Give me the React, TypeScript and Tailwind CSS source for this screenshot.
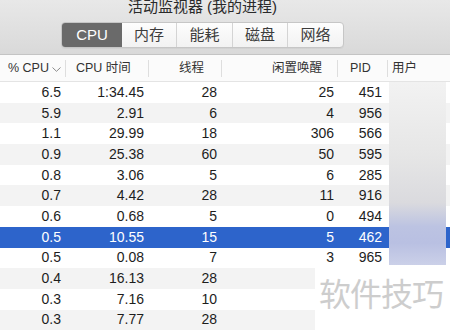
import React from 'react';

const rows = [
    ['6.5', '1:34.45', '28', '25', '451'],
    ['5.9', '2.91', '6', '4', '956'],
    ['1.1', '29.99', '18', '306', '566'],
    ['0.9', '25.38', '60', '50', '595'],
    ['0.8', '3.06', '5', '6', '285'],
    ['0.7', '4.42', '28', '11', '916'],
    ['0.6', '0.68', '5', '0', '494'],
    ['0.5', '10.55', '15', '5', '462'],
    ['0.5', '0.08', '7', '3', '965'],
    ['0.4', '16.13', '28', '', ''],
    ['0.3', '7.16', '10', '', ''],
    ['0.3', '7.77', '28', '', ''],
];

const tabs = [
    { label: 'CPU', w: 'w-[60px]' },
    { label: '内存', w: 'w-[54px]' },
    { label: '能耗', w: 'w-[56px]' },
    { label: '磁盘', w: 'w-[55px]' },
    { label: '网络', w: 'w-[56px]' },
];

function Divider() {
    return <div className="w-px h-[17px] bg-[#dedede] shrink-0"></div>;
}

export default function App() {
    return (
        <div className="relative w-[450px] h-[332px] overflow-hidden bg-white text-[#1d1d1d] font-['Liberation_Sans','Noto_Sans_CJK_SC',sans-serif]">
            {/* title bar */}
            <div className="h-[55px] flex flex-col items-center pr-[45px] bg-[linear-gradient(#e8e8e8,#d9d9d9)] border-b border-[#c4c4c4]">
                <div className="-mt-[3px] h-[20px] leading-[20px] text-[15px] text-[#2a2a2a]">活动监视器 (我的进程)</div>
                <div className="mt-[5px] flex h-[26px] rounded-[4px] border border-[#c6c6c6] bg-[linear-gradient(#fdfdfd,#f2f2f2)] overflow-hidden shadow-[0_1px_0_rgba(0,0,0,0.04)]">
                    {tabs.map((t, i) => (
                        <div
                            key={t.label}
                            className={`${t.w} flex items-center justify-center text-[15px] ${i === 0 ? 'bg-[#6a6a6a] text-white' : 'text-[#3c3c3c] border-l border-[#d4d4d4]'} ${i === 1 ? 'border-l-0' : ''}`}
                        >
                            {t.label}
                        </div>
                    ))}
                </div>
            </div>

            {/* header */}
            <div className="h-[27px] flex items-center text-[12.5px] text-[#333] bg-[#fbfbfb] border-b border-[#e4e4e4]">
                <div className="w-[65px] flex items-center pl-[8px]">
                    <span>% CPU</span>
                    <svg width="9" height="5" viewBox="0 0 9 5" className="ml-[3px] mt-[2px]">
                        <path d="M0.5 0.5 L4.5 4.3 L8.5 0.5" fill="none" stroke="#8a8a8a" strokeWidth="1" />
                    </svg>
                </div>
                <Divider />
                <div className="w-[82px] pl-[10px]">CPU 时间</div>
                <Divider />
                <div className="w-[72px] text-right pr-[17px]">线程</div>
                <Divider />
                <div className="w-[115px] text-right pr-[15px]">闲置唤醒</div>
                <Divider />
                <div className="w-[49px] pl-[12px]">PID</div>
                <Divider />
                <div className="flex-1 pl-[4px]">用户</div>
            </div>

            {/* rows */}
            <div className="flex flex-col text-[14px]">
                {rows.map((r, i) => (
                    <div
                        key={i}
                        className={`h-[20.7px] flex items-center ${i === 7 ? 'bg-[#2d64cb] text-white' : i % 2 === 1 ? 'bg-[#f3f3f3]' : 'bg-white'}`}
                    >
                        <div className="w-[66px] text-right pr-[5px]">{r[0]}</div>
                        <div className="w-[83px] text-right pr-[5px]">{r[1]}</div>
                        <div className="w-[73px] text-right pr-[5px]">{r[2]}</div>
                        <div className="w-[116px] text-right pr-[4px]">{r[3]}</div>
                        <div className="w-[50px] text-right pr-[6px]">{r[4]}</div>
                        <div className="flex-1"></div>
                    </div>
                ))}
            </div>

            {/* blurred user column */}
            <div className="absolute left-[389px] top-[82px] w-[57px] h-[183px] bg-[linear-gradient(#f2f2f2_0%,#e6e6e6_40%,#dadade_66%,#bcc3e2_79%,#b9c0e2_88%,#cbd0e8_100%)]"></div>

            {/* watermark */}
            <div className="absolute left-[315px] top-[268px] right-0 bottom-0 bg-white pl-[4px] pt-[10px]">
                <span className="text-[32px] leading-[34px] text-[#cdcdcd] tracking-[-1px]">软件技巧</span>
            </div>
        </div>
    );
}
